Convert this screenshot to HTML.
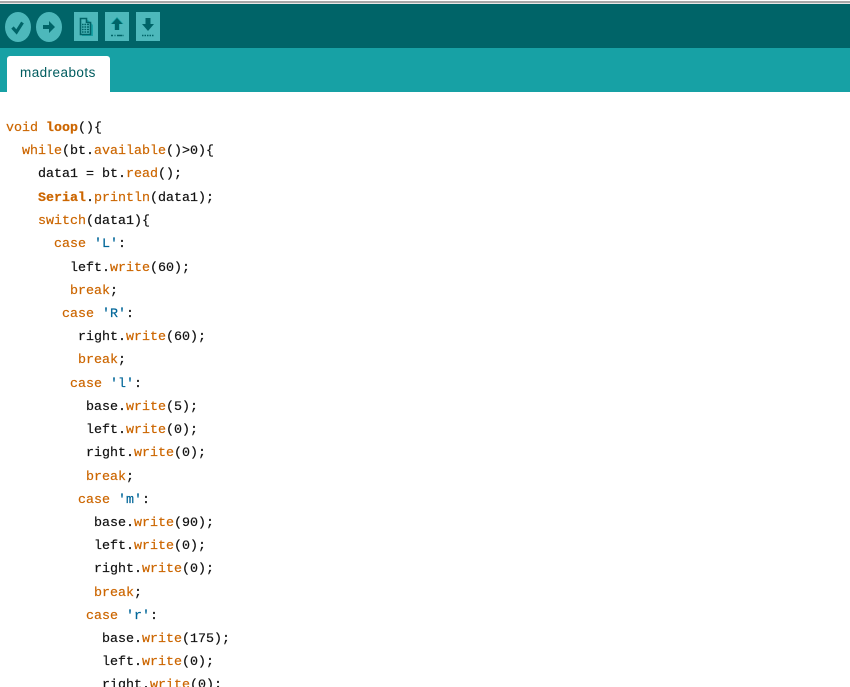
<!DOCTYPE html>
<html><head><meta charset="utf-8"><style>
html,body{margin:0;padding:0;background:#fff;}
#p{position:relative;width:850px;height:687px;overflow:hidden;background:#fff;}
.b{position:absolute;left:0;width:850px;}
pre{position:absolute;margin:0;font:13.33px/16px "Liberation Mono",monospace;color:#111;white-space:pre;-webkit-text-stroke:.2px;}
i{font-style:normal;color:#cc6600;}
b{color:#cc6600;font-weight:bold;}
u{text-decoration:none;color:#006699;}
svg{position:absolute;left:0;top:0;}
#tab{position:absolute;left:7px;top:56px;width:103px;height:36px;background:#fff;border-radius:3px 3px 0 0;}
#tt{position:absolute;left:20px;top:65px;font:13.5px/16px "Liberation Sans",sans-serif;color:#005c5f;letter-spacing:.45px;}
</style></head><body><div id="p">
<div class="b" style="top:0;height:1px;background:#fff"></div>
<div class="b" style="top:1px;height:2px;background:#a8a8a8"></div>
<div class="b" style="top:3px;height:1px;background:#e8e8e8"></div>
<div class="b" style="top:4px;height:44px;background:#006468"></div>
<div class="b" style="top:48px;height:44px;background:#17a1a5"></div>
<svg width="170" height="48" viewBox="0 0 170 48">
<ellipse cx="18" cy="27" rx="13" ry="15" fill="#4db8bb"/>
<ellipse cx="49" cy="27" rx="13" ry="15" fill="#4db8bb"/>
<path d="M12.500 27.500l4 4.500 6-9.500" fill="none" stroke="#006468" stroke-width="3.200"/>
<path d="M43 25h6v-4l6 6-6 6v-4h-6z" fill="#006468"/>
<rect x="74" y="12" width="24" height="29" fill="#4db8bb"/>
<rect x="105" y="12" width="24" height="29" fill="#4db8bb"/>
<rect x="136" y="12" width="24" height="29" fill="#4db8bb"/>
<path d="M82 20h6l5 5v11h-11z" fill="#17a1a5"/>
<path d="M80.500 18.500h6v4h4v12h-10z" fill="#4db8bb" stroke="#006468" stroke-width="1.600"/>
<path d="M82 24.500h7M82 27h7M82 29.500h7M82 32h7" stroke="#006468" stroke-width="1.400"/>
<path d="M84 23v10M86.500 23v10" stroke="#4db8bb" stroke-width=".8"/>
<path d="M117 17l-6.500 7h4v6h5v-6h4z" fill="#17a1a5"/>
<path d="M117 18l-5.500 6h3.500v6h4v-6h3.500z" fill="#006468"/>
<path d="M111 35.500h2M114.500 35.500h1M117 35.500h5M122.500 35.500h1" stroke="#006468" stroke-width="1.600"/>
<path d="M145.500 18h5v6h3.500l-6 7-6-7h3.500z" fill="#006468"/>
<path d="M142 35.500h12" stroke="#006468" stroke-width="1.600" stroke-dasharray="1.500 1"/>
</svg>
<div id="tab"></div>
<div id="tt">madreabots</div>
<pre style="left:6px;top:121px"><i>void</i> <b>loop</b>(){</pre>
<pre style="left:22px;top:144px"><i>while</i>(bt.<i>available</i>()&gt;0){</pre>
<pre style="left:38px;top:167px">data1 = bt.<i>read</i>();</pre>
<pre style="left:38px;top:191px"><b>Serial</b>.<i>println</i>(data1);</pre>
<pre style="left:38px;top:214px"><i>switch</i>(data1){</pre>
<pre style="left:54px;top:237px"><i>case</i> <u>'L'</u>:</pre>
<pre style="left:70px;top:261px">left.<i>write</i>(60);</pre>
<pre style="left:70px;top:284px"><i>break</i>;</pre>
<pre style="left:62px;top:307px"><i>case</i> <u>'R'</u>:</pre>
<pre style="left:78px;top:330px">right.<i>write</i>(60);</pre>
<pre style="left:78px;top:353px"><i>break</i>;</pre>
<pre style="left:70px;top:377px"><i>case</i> <u>'l'</u>:</pre>
<pre style="left:86px;top:400px">base.<i>write</i>(5);</pre>
<pre style="left:86px;top:423px">left.<i>write</i>(0);</pre>
<pre style="left:86px;top:446px">right.<i>write</i>(0);</pre>
<pre style="left:86px;top:470px"><i>break</i>;</pre>
<pre style="left:78px;top:493px"><i>case</i> <u>'m'</u>:</pre>
<pre style="left:94px;top:516px">base.<i>write</i>(90);</pre>
<pre style="left:94px;top:539px">left.<i>write</i>(0);</pre>
<pre style="left:94px;top:562px">right.<i>write</i>(0);</pre>
<pre style="left:94px;top:586px"><i>break</i>;</pre>
<pre style="left:86px;top:609px"><i>case</i> <u>'r'</u>:</pre>
<pre style="left:102px;top:632px">base.<i>write</i>(175);</pre>
<pre style="left:102px;top:655px">left.<i>write</i>(0);</pre>
<pre style="left:102px;top:678px">right.<i>write</i>(0);</pre>
</div></body></html>
